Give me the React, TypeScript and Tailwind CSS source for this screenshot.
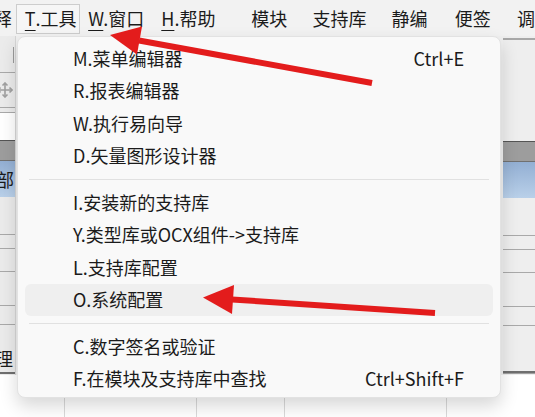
import React from "react";

type Entry = { label: string; shortcut?: string; active?: boolean } | "sep";

const menu: Entry[] = [
  { label: "M.菜单编辑器", shortcut: "Ctrl+E" },
  { label: "R.报表编辑器" },
  { label: "W.执行易向导" },
  { label: "D.矢量图形设计器" },
  "sep",
  { label: "I.安装新的支持库" },
  { label: "Y.类型库或OCX组件->支持库" },
  { label: "L.支持库配置" },
  { label: "O.系统配置", active: true },
  "sep",
  { label: "C.数字签名或验证" },
  { label: "F.在模块及支持库中查找", shortcut: "Ctrl+Shift+F" },
];

function Line({ dark }: { dark?: boolean }) {
  return <div className={dark ? "h-[2px] bg-[#6f6f6f]" : "h-px bg-[#a9a9a9]"} />;
}

// grey band + selected blue row, shared by both side strips
function SharedRows({ label }: { label?: string }) {
  return (
    <>
      <div className="h-[21px] border-t border-[#555] border-b border-b-[#707070] bg-[#9d9d9d]" />
      <div className="h-[36px] bg-gradient-to-b from-[#93afd3] to-[#b9d0e9] flex items-center text-[18px] text-[#1b1b1b] overflow-hidden whitespace-nowrap">
        {label && <span className="-ml-[4px]">{label}</span>}
      </div>
      <div className="h-[37px]" />
      <Line />
      <div className="h-[13px]" />
      <Line />
      <div className="h-[22px]" />
      <Line />
      <div className="h-[33px]" />
      <Line />
      <div className="h-[18px]" />
      <Line />
      <div className="h-[19px]" />
    </>
  );
}

export default function App() {
  return (
    <div className="relative w-[535px] h-[417px] overflow-hidden bg-[#f0f0f0] text-[#1b1b1b] font-['Noto_Sans_CJK_SC',sans-serif]">
      {/* menu bar */}
      <div className="h-[36px] flex items-center text-[18px] whitespace-nowrap bg-[#f2f2f2]">
        <span className="w-[16px] overflow-hidden flex justify-end">
          <span className="mr-[4px]">释</span>
        </span>
        <span className="h-[30px] w-[65px] mt-[1px] flex items-center pl-[8px] border border-[#cdcdcd] bg-[#f6f6f6]">
          <span className="underline underline-offset-[4px]">T</span>.工具
        </span>
        <span className="w-[82px] pl-[8px]">
          <span className="underline underline-offset-[4px]">W</span>.窗口
        </span>
        <span className="w-[91px]">
          <span className="underline underline-offset-[4px]">H</span>.帮助
        </span>
        <span className="w-[62px]">模块</span>
        <span className="w-[80px]">支持库</span>
        <span className="w-[64px]">静编</span>
        <span className="w-[63px]">便签</span>
        <span>调</span>
      </div>

      {/* background window */}
      <div className="flex h-[339px]">
        <div className="w-[16px] flex flex-col bg-[#ebebeb] border-r border-[#d6d6d6] overflow-hidden">
          <div className="h-[36px] flex justify-end pt-[11px] pr-[1px]">
            <div className="w-px h-[16px] bg-[#9a9a9a]" />
          </div>
          <Line />
          <div className="h-[34px] flex items-center -ml-[3px]">
            <svg width="16" height="16" viewBox="0 0 16 16" fill="none" stroke="#a0a0a0" strokeWidth="1.6">
              <path d="M8 1v14M1 8h14" />
              <path d="M5.5 3.5 8 1l2.5 2.5M5.5 12.5 8 15l2.5-2.5M3.5 5.5 1 8l2.5 2.5M12.5 5.5 15 8l-2.5 2.5" />
            </svg>
          </div>
          <Line />
          <div className="h-[4px]" />
          <Line />
          <div className="h-[27px] bg-white" />
          <SharedRows label="部" />
          <div className="h-[28px] flex items-center text-[18px] overflow-hidden whitespace-nowrap">
            <span className="-ml-[5px]">理</span>
          </div>
          <Line dark />
        </div>
        <div className="flex-1 bg-[#f0f0f0]" />
        <div className="w-[32px] flex flex-col bg-[#eeeeee]">
          <div className="h-[2px]" />
          <div className="h-[2px] bg-[#a8a8a8]" />
          <div className="h-[101px]" />
          <SharedRows />
          <div className="h-[26px]" />
          <Line dark />
          <div className="h-px bg-[#a0a0a0]" />
        </div>
      </div>

      {/* bottom grid */}
      <div className="flex h-[42px] bg-white">
        <div className="w-[65px] border-r border-[#dadada]" />
        <div className="w-[132px] border-r border-[#dadada]" />
        <div className="w-[88px] border-r border-[#dadada]" />
        <div className="w-[162px] border-r border-[#dadada]" />
        <div className="flex-1" />
      </div>

      {/* popup menu */}
      <div className="absolute left-[17px] top-[36px] w-[484px] h-[362px] rounded-[8px] bg-[#f9f9f9] border border-[#e2e2e2] shadow-[0_8px_18px_rgba(0,0,0,0.16)] px-[7px] pt-[5px] text-[18px] text-[#1b1b1b] whitespace-nowrap">
        {menu.map((m, i) =>
          m === "sep" ? (
            <div key={i} className="h-[14px] flex items-center px-[4px]">
              <div className="h-px w-full bg-[#e1e1e1]" />
            </div>
          ) : (
            <div
              key={i}
              className={`h-[32.5px] flex items-center justify-between pl-[48px] pr-[29px] rounded-[6px] ${
                m.active ? "bg-[#efefef]" : ""
              }`}
            >
              <span>{m.label}</span>
              {m.shortcut && <span>{m.shortcut}</span>}
            </div>
          )
        )}
      </div>

      {/* red annotation arrows */}
      <svg className="absolute inset-0 pointer-events-none" width="535" height="417">
        <line x1="372" y1="83" x2="139" y2="40.5" stroke="#e31c1c" strokeWidth="6" />
        <polygon points="110,35 142,26.5 137,54.5" fill="#e31c1c" />
        <line x1="435" y1="313" x2="232" y2="299.5" stroke="#e31c1c" strokeWidth="6" />
        <polygon points="203,297.5 234,285 232,314" fill="#e31c1c" />
      </svg>
    </div>
  );
}
